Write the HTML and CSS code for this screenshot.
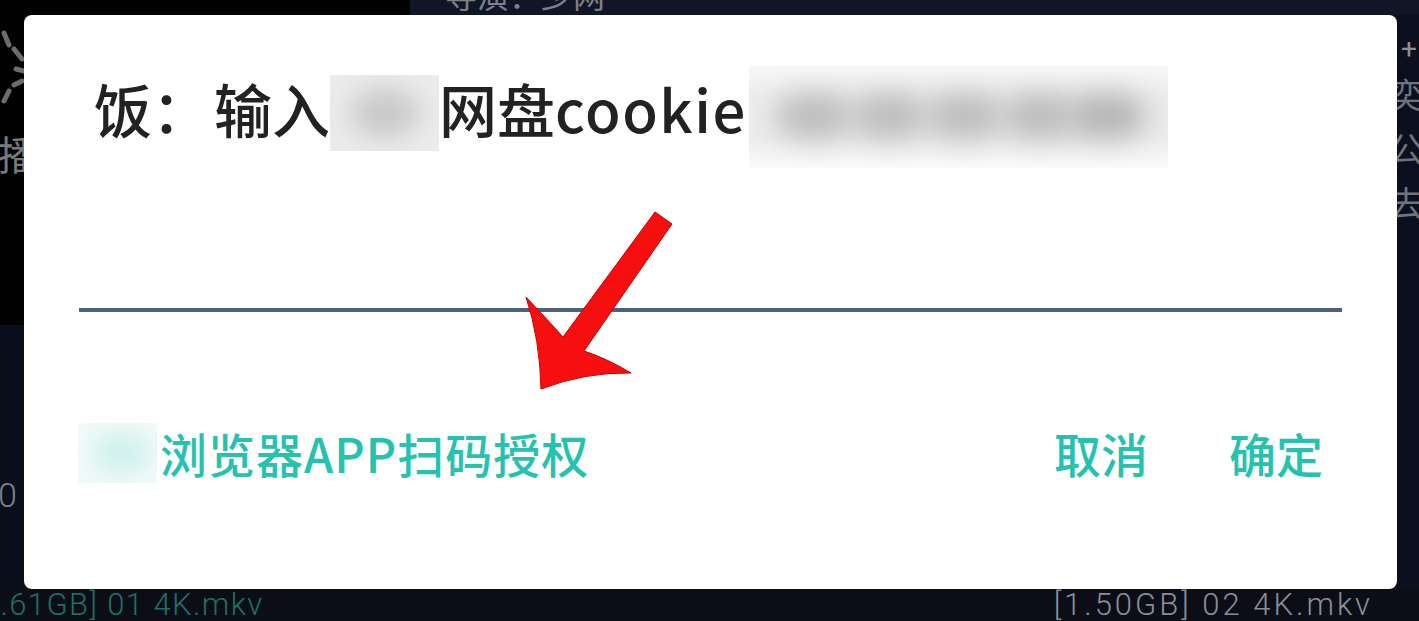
FILE: index.html
```html
<!DOCTYPE html>
<html lang="zh-CN">
<head>
<meta charset="utf-8">
<title>输入网盘cookie</title>
<link rel="stylesheet" href="styles.css">
</head>
<body>
<div class="screen">
  <div class="top-strip">
    <div class="top-black"></div>
    <div class="top-info"><span class="top-text">导演：少网</span></div>
  </div>
  <div class="left-strip">
    <div class="left-black">
      <svg class="spinner" width="24" height="90" viewBox="0 0 24 90">
        <g stroke="#6d6d6d" stroke-width="5" stroke-linecap="round">
          <line x1="4" y1="14" x2="9" y2="26"/>
          <line x1="14" y1="30" x2="22" y2="40"/>
          <line x1="16" y1="50" x2="24" y2="52"/>
          <line x1="14" y1="66" x2="22" y2="62"/>
          <line x1="4" y1="82" x2="9" y2="72"/>
        </g>
      </svg>
      <span class="left-char">播</span>
    </div>
    <div class="left-navy"><span class="left-zero">0</span></div>
  </div>
  <div class="dialog">
    <div class="title">
      <span>饭：<span class="title-gap">输入</span></span><span class="blur blur-a"><i></i></span><span>网盘<span class="latin">cookie</span></span><span class="blur blur-b"><i></i><i></i><i></i><i></i><i></i></span>
    </div>
    <div class="field"></div>
    <div class="actions">
      <div class="scan"><span class="blur blur-c"><i></i></span><span class="scan-text">浏览器APP扫码授权</span></div>
      <div class="buttons">
        <span class="btn">取消</span>
        <span class="btn">确定</span>
      </div>
    </div>
    <svg class="arrow" viewBox="24 15 1373 574" width="1373" height="574">
      <path d="M655,212 L672,224 L584,351 Q606,358 631,373 Q585,372 541,389 Q540,340 526,297 Q546,318 563,337 Z" fill="#f70f0f" stroke="#c40000" stroke-width="1"/>
    </svg>
  </div>
  <div class="right-strip">
    <span class="r-plus">+</span>
    <span class="r-char">奕</span>
    <span class="r-char">公</span>
    <span class="r-char">去</span>
  </div>
  <div class="bottom-strip">
    <span class="file file-a">[1.61GB] 01 4K.mkv</span>
    <span class="file file-b">[1.50GB] 02 4K.mkv</span>
  </div>
</div>
</body>
</html>
```

FILE: styles.css
```css
* { box-sizing: border-box; }
html, body { margin: 0; padding: 0; }
body {
  background: #0a0d18;
  font-family: "Noto Sans CJK SC", "Noto Sans", sans-serif;
  overflow: hidden;
}
.screen {
  width: 1419px;
  height: 621px;
  display: grid;
  grid-template-columns: 24px 1373px 22px;
  grid-template-rows: 15px 574px 32px;
  background: #0b0e1a;
  overflow: hidden;
}
.top-strip {
  grid-column: 1 / 4;
  grid-row: 1;
  display: flex;
  overflow: hidden;
}
.top-black { width: 410px; background: #020203; }
.top-info {
  flex: 1;
  background: #111626;
  overflow: hidden;
  padding-left: 35px;
}
.top-text {
  display: block;
  margin-top: -24px;
  font-size: 32px;
  line-height: 36px;
  color: #7c808a;
}
.left-strip {
  grid-column: 1;
  grid-row: 2;
  display: flex;
  flex-direction: column;
}
.left-black {
  height: 310px;
  background: #020203;
  display: flex;
  flex-direction: column;
}
.spinner { display: block; margin-top: 4px; }
.left-char {
  margin-top: 22px;
  margin-left: -2px;
  font-size: 40px;
  line-height: 44px;
  color: #7a7a7a;
}
.left-navy {
  flex: 1;
  background: #0a0f1c;
  padding-top: 150px;
}
.left-zero {
  display: block;
  font-family: Roboto, sans-serif;
  font-weight: 300;
  font-size: 34px;
  line-height: 40px;
  color: #7d8189;
  margin-left: -2px;
}
.dialog {
  grid-column: 2;
  grid-row: 2;
  position: relative;
  background: #fff;
  border-radius: 8px;
  display: flex;
  flex-direction: column;
  z-index: 1;
}
.title {
  margin-top: 50px;
  padding-left: 70px;
  height: 86px;
  display: flex;
  align-items: center;
  font-size: 58px;
  font-weight: 500;
  line-height: 86px;
  color: #222;
  white-space: nowrap;
}
.title-gap { margin-left: 4px; }
.latin { letter-spacing: 1.5px; }
.blur {
  position: relative;
  display: inline-block;
  overflow: hidden;
}
.blur i {
  position: absolute;
  border-radius: 50%;
  filter: blur(14px);
}
.blur-a {
  width: 109px;
  height: 76px;
  background: #ececec;
  margin-top: 10px;
}
.blur-a i {
  left: 20px; top: 14px; width: 70px; height: 48px;
  background: #c6c6c6;
}
.blur-b {
  width: 419px;
  height: 103px;
  background: linear-gradient(#f8f8f8, #ececec 30%, #ececec 70%, #fafafa);
  margin-left: 2px;
  margin-top: 16px;
}
.blur-b i {
  top: 28px; width: 80px; height: 46px;
  background: #bcbcbc;
}
.blur-b i:nth-child(1) { left: 25px; }
.blur-b i:nth-child(2) { left: 100px; }
.blur-b i:nth-child(3) { left: 175px; }
.blur-b i:nth-child(4) { left: 250px; }
.blur-b i:nth-child(5) { left: 318px; background: #b4b4b4; }
.field {
  margin: 0 55px;
  height: 161px;
  border-bottom: 4px solid #4f5f82;
}
.actions {
  margin-top: 111px;
  height: 60px;
  display: flex;
  align-items: center;
  justify-content: space-between;
  padding-right: 74px;
}
.scan {
  display: flex;
  align-items: center;
  padding-left: 54px;
}
.blur-c {
  width: 79px;
  height: 60px;
  background: #f3fbfa;
}
.blur-c i {
  left: 14px; top: 10px; width: 60px; height: 40px;
  background: #c9efe9;
}
.scan-text, .btn {
  font-size: 47px;
  line-height: 60px;
  font-weight: 500;
  color: #26c2b0;
  white-space: nowrap;
}
.scan-text { margin-left: 3px; letter-spacing: 1px; }
.buttons {
  display: flex;
  gap: 81px;
}
.arrow {
  position: absolute;
  left: 0;
  top: 0;
  pointer-events: none;
}
.right-strip {
  grid-column: 3;
  grid-row: 2;
  background: #0b0f1e;
  display: flex;
  flex-direction: column;
  padding-top: 16px;
  overflow: hidden;
}
.r-plus {
  font-family: Roboto, sans-serif;
  font-size: 28px;
  line-height: 36px;
  color: #8b8f98;
  margin-left: 4px;
}
.r-char {
  font-size: 34px;
  line-height: 54px;
  color: #6f737c;
  margin-left: -8px;
}
.bottom-strip {
  grid-column: 1 / 4;
  grid-row: 3;
  background: #0b0e17;
  display: flex;
  justify-content: space-between;
  align-items: center;
  overflow: hidden;
  font-family: Roboto, sans-serif;
  font-weight: 300;
  font-size: 31px;
  line-height: 32px;
  letter-spacing: 3px;
  white-space: nowrap;
}
.file-a { color: #1f6f66; margin-left: -27px; letter-spacing: 1.4px; }
.file-b { color: #8a8e97; margin-right: 46px; letter-spacing: 3px; }
```
